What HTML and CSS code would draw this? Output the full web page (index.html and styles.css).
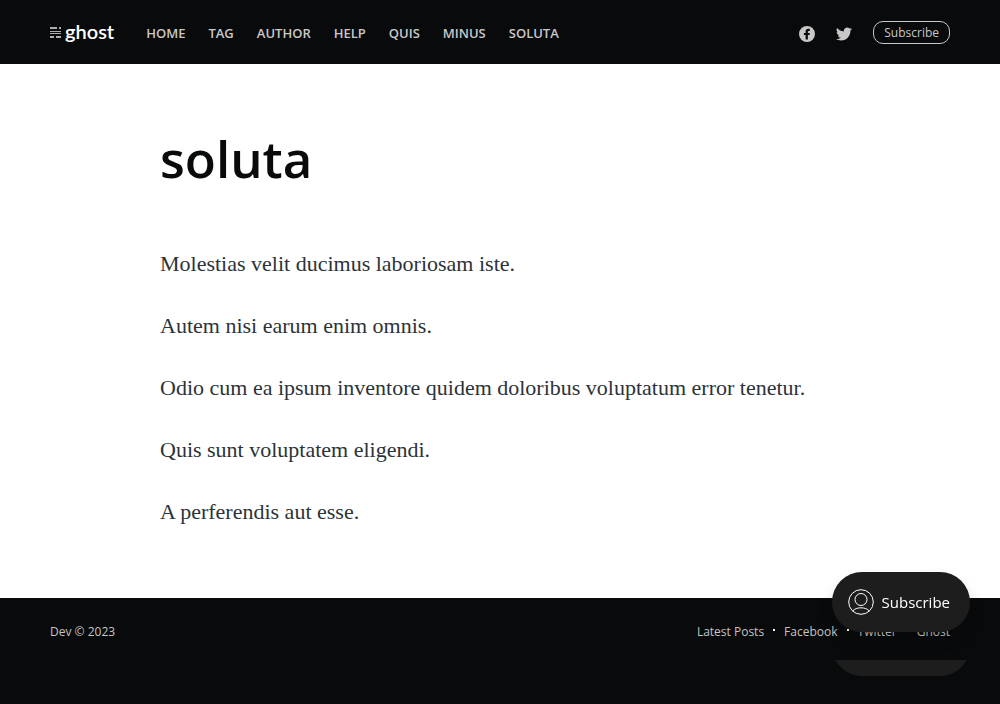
FILE: index.html
```html
<!DOCTYPE html>
<html lang="en">
<head>
<meta charset="utf-8">
<meta name="viewport" content="width=device-width, initial-scale=1">
<title>soluta</title>
<link rel="stylesheet" href="styles.css">
</head>
<body>
<header class="site-header">
  <nav class="site-nav" aria-label="Main">
    <a class="logo" href="#">
      <svg class="logo-mark" viewBox="0 0 11 13" aria-hidden="true"><path d="M0 1h7v2H0zM9 1h2v2H9zM0 5h11v1H0zM0 7h11v1H0zM0 10h4v2H0zM6 10h5v2H6z"/></svg>
      <span class="logo-text">ghost</span>
    </a>
    <ul class="nav-list">
      <li><a href="#">Home</a></li>
      <li><a href="#">Tag</a></li>
      <li><a href="#">Author</a></li>
      <li><a href="#">Help</a></li>
      <li><a href="#">Quis</a></li>
      <li><a href="#">Minus</a></li>
      <li><a href="#">soluta</a></li>
    </ul>
  </nav>
  <div class="header-actions">
    <a class="social" href="#" aria-label="Facebook"><svg class="icon-facebook" viewBox="0 0 32 32" aria-hidden="true"><path d="M16 0a16 16 0 1 0 0 32a16 16 0 0 0 0-32zm5.600 10h-2.300c-1.200 0-1.500.600-1.500 1.500V14h3.800l-.500 3.800h-3.300V27h-4.600v-9.200H9.800V14h3.400v-2.800c0-3.600 2.200-5.600 5.400-5.600 1.400 0 2.700.100 3 .200z"/></svg></a>
    <a class="social" href="#" aria-label="Twitter"><svg class="icon-twitter" viewBox="0 0 24 24" aria-hidden="true"><path d="M23.950 4.570a10 10 0 0 1-2.820.770 4.960 4.960 0 0 0 2.160-2.720c-.950.550-2 .950-3.130 1.180a4.920 4.920 0 0 0-8.380 4.480C7.690 8.090 4.070 6.130 1.640 3.160a4.920 4.920 0 0 0 1.520 6.570 4.900 4.900 0 0 1-2.230-.610v.060a4.920 4.920 0 0 0 3.950 4.830 5 5 0 0 1-2.210.080 4.940 4.940 0 0 0 4.600 3.420A9.870 9.870 0 0 1 0 19.540a14 14 0 0 0 7.550 2.210c9.050 0 14-7.500 14-13.980 0-.210 0-.420-.020-.630a10 10 0 0 0 2.420-2.570z"/></svg></a>
    <a class="subscribe" href="#">Subscribe</a>
  </div>
</header>
<main class="content">
  <h1 class="title">soluta</h1>
  <p>Molestias velit ducimus laboriosam iste.</p>
  <p>Autem nisi earum enim omnis.</p>
  <p>Odio cum ea ipsum inventore quidem doloribus voluptatum error tenetur.</p>
  <p>Quis sunt voluptatem eligendi.</p>
  <p>A perferendis aut esse.</p>
</main>
<footer class="site-footer">
  <div class="copyright"><a href="#">Dev</a> © 2023</div>
  <nav class="footer-nav" aria-label="Footer">
    <a href="#">Latest Posts</a>
    <a href="#">Facebook</a>
    <a href="#">Twitter</a>
    <a href="#">Ghost</a>
  </nav>
</footer>
<div class="portal">
  <div class="portal-echo" aria-hidden="true"></div>
  <button class="portal-button" type="button">
    <svg class="icon-user" viewBox="0 0 26 26" aria-hidden="true"><circle cx="13" cy="13" r="12.300"/><circle cx="13" cy="10.500" r="6"/><path d="M4.600 22c2-2.200 5-3.200 8.400-3.200s6.400 1 8.400 3.200"/></svg>
    Subscribe
  </button>
</div>
</body>
</html>
```
FILE: styles.css
```css
* { box-sizing: border-box; }
body {
  margin: 0;
  min-height: 100vh;
  display: flex;
  flex-direction: column;
  background: #fff;
  color: #090a0b;
  font-family: "Open Sans", "Noto Sans", sans-serif;
}
a { color: inherit; text-decoration: none; }
.site-header {
  display: flex;
  align-items: center;
  justify-content: space-between;
  height: 64px;
  padding: 0 50px;
  background: #090a0b;
  color: #c8c8c8;
}
.site-nav { display: flex; align-items: center; gap: 32px; }
.logo { display: flex; align-items: center; gap: 4px; }
.logo-mark { width: 11px; height: 13px; fill: #adadad; }
.logo-text {
  color: #fff;
  font: 600 20px/26px Lato, sans-serif;
  padding-bottom: 2px;
}
.nav-list {
  display: flex;
  gap: 23px;
  margin: 0;
  padding: 2px 0 0;
  list-style: none;
  font-size: 13px;
  font-weight: 600;
  line-height: 20px;
  text-transform: uppercase;
}
.header-actions { display: flex; align-items: center; gap: 21px; }
.social { display: flex; padding-top: 3px; }
.icon-facebook, .icon-twitter { width: 16px; height: 16px; fill: currentColor; }
.subscribe {
  padding: 1px 10px 0;
  border: 1px solid currentColor;
  border-radius: 10px;
  font-size: 12px;
  line-height: 20px;
}
.content {
  flex: 1;
  width: 100%;
  max-width: 780px;
  margin: 0 auto;
  padding: 64px 50px 70px;
  font-family: "Liberation Serif", serif;
}
.title {
  margin: 0 0 60px;
  font: 600 51px/60px "Open Sans", "Noto Sans", sans-serif;
}
.content p {
  margin: 0 0 30px;
  color: #2c3338;
  font-size: 22px;
  line-height: 32px;
}
.content p:last-child { margin: 0; }
.site-footer {
  display: flex;
  justify-content: space-between;
  height: 106px;
  padding: 24px 50px 0;
  background: #090a0b;
  color: #c4c4c4;
  font-size: 12px;
  line-height: 20px;
}
.footer-nav { display: flex; }
.footer-nav a { display: flex; }
.footer-nav a + a::before {
  content: "";
  width: 2px;
  height: 2px;
  margin: 7px 9px 0;
  background: #fff;
}
.portal {
  position: fixed;
  right: 30px;
  bottom: 28px;
}
.portal-button {
  display: flex;
  align-items: center;
  gap: 8px;
  height: 60px;
  margin-bottom: 44px;
  padding: 0 20px 0 16px;
  border: 0;
  border-radius: 30px;
  background: #1d1d1d;
  box-shadow: 0 8px 16px -2px rgba(0, 0, 0, 0.18);
  color: #fff;
  font: 500 15px/20px "Open Sans", "Noto Sans", sans-serif;
}
.icon-user { width: 26px; height: 26px; fill: none; stroke: #fff; stroke-width: 1; }
.portal-echo {
  position: absolute;
  right: 0;
  bottom: 0;
  width: 100%;
  height: 60px;
  border-radius: 30px;
  background: #1d1d1d;
  clip-path: inset(44px 0 0 0);
}
```
